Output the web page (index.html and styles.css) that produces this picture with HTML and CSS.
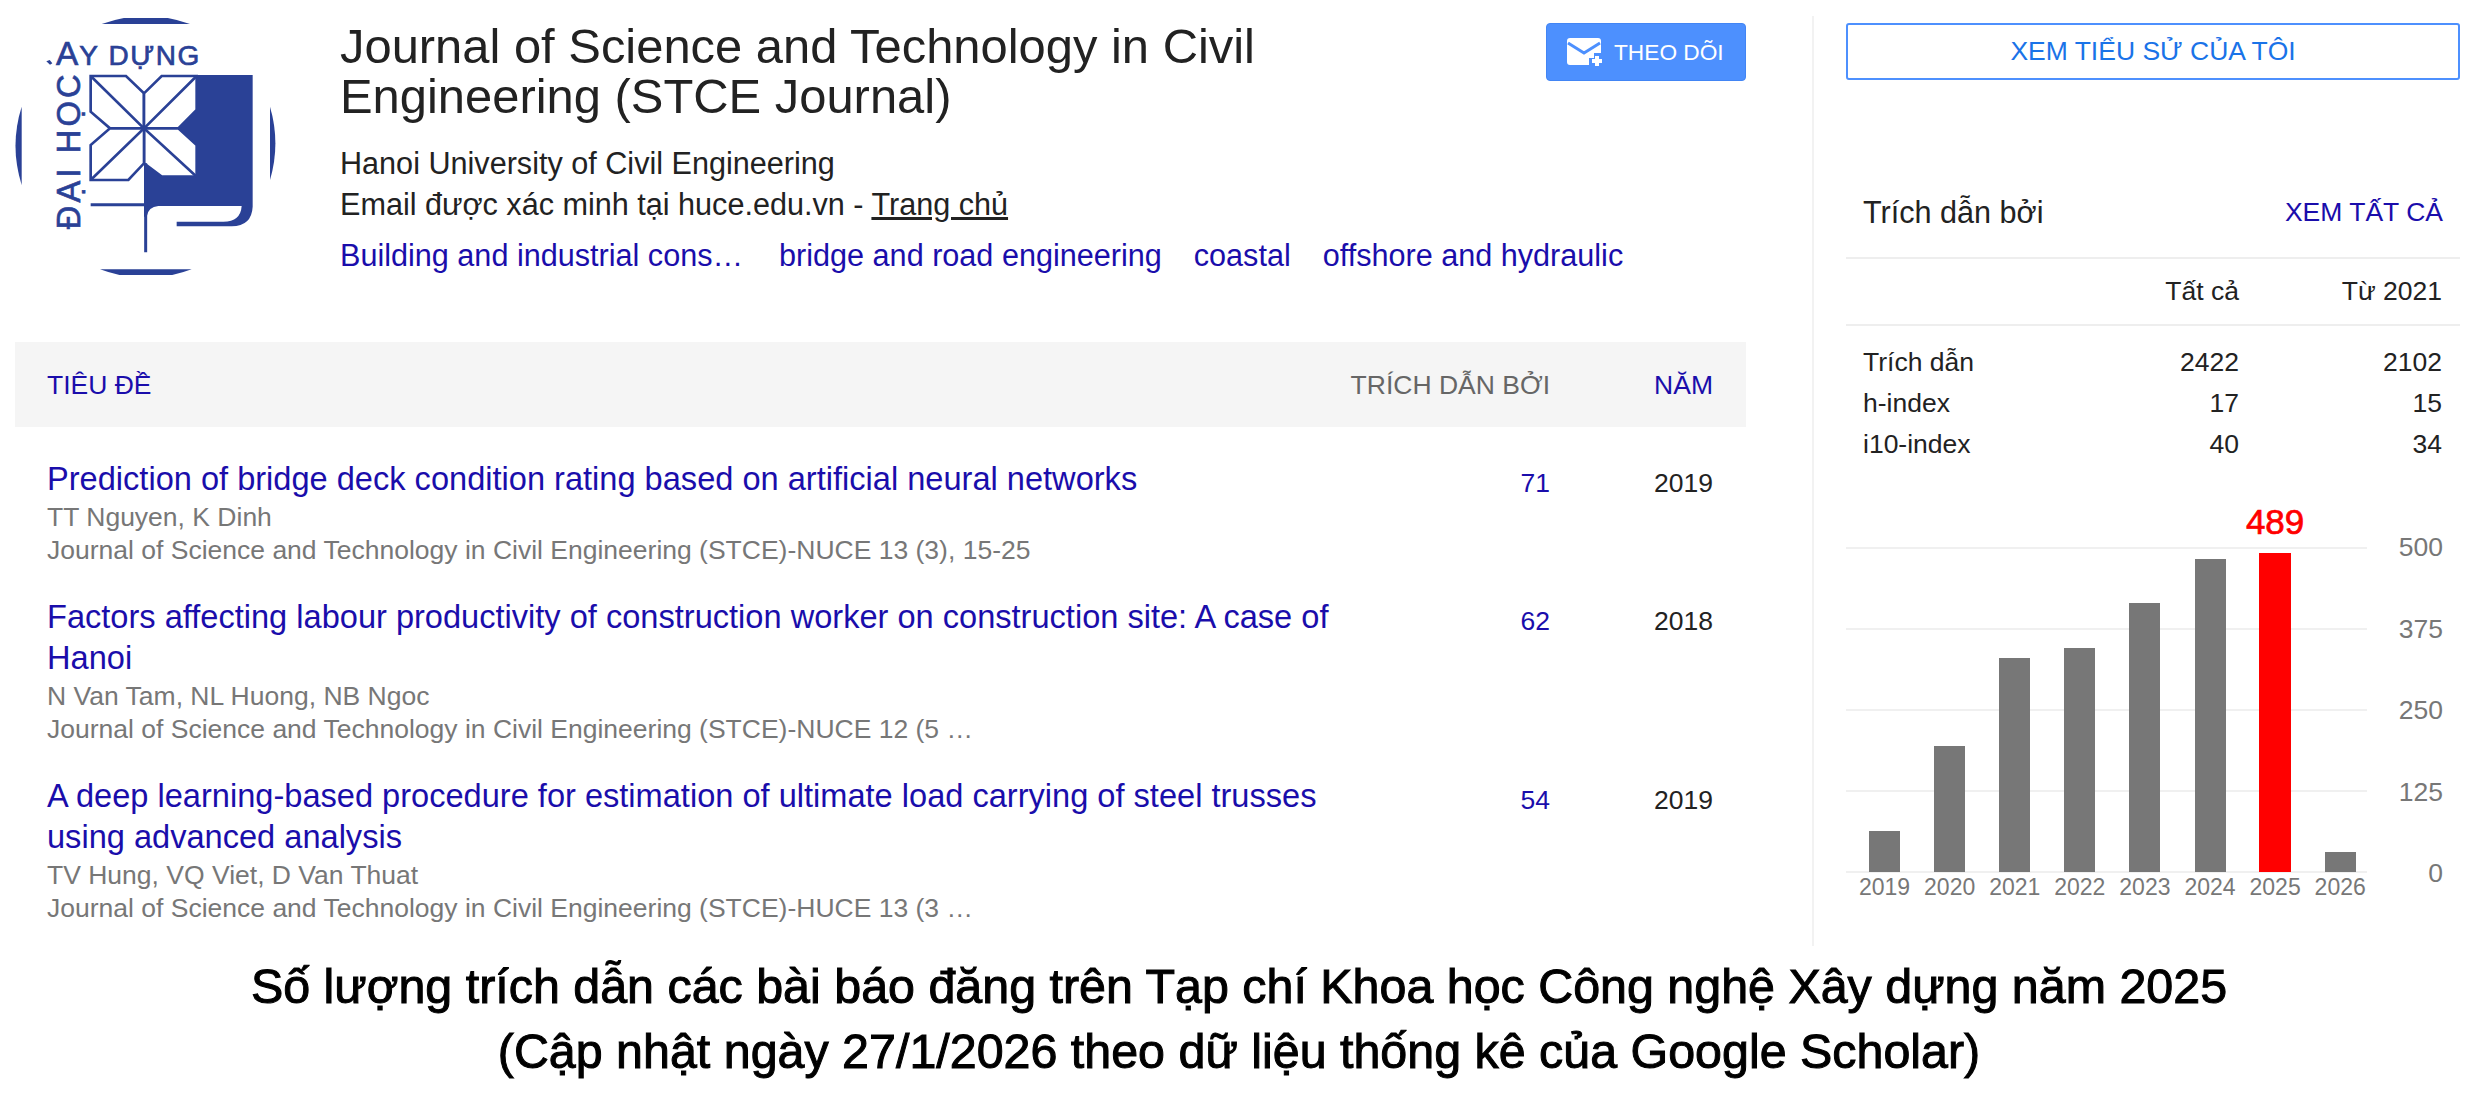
FILE: index.html
```html
<!DOCTYPE html>
<html lang="vi">
<head>
<meta charset="utf-8">
<title>Google Scholar</title>
<link rel="stylesheet" href="styles.css">
</head>
<body>
<main class="page">
  <section class="left">
    <header class="profile">
      <svg class="logo" viewBox="45 54 783 771" aria-label="Logo">
        <path class="logo-fill" d="M305 72A390 390 0 0 1 570 72Z"/>
        <path class="logo-fill" d="M300 808H575A390 390 0 0 1 300 808Z"/>
        <path class="logo-fill" d="M65 320V555A390 390 0 0 1 65 320Z"/>
        <path class="logo-fill" d="M810 320V540A390 390 0 0 0 810 320Z"/>
        <path class="logo-fill" d="M590 225H758V620Q755 678 695 679H530V665H670Q722 665 725 618H475Q445 620 440 650H432V490L432 385Z"/>
        <g class="petals">
          <path d="M272 228H378L432 280V385H330L272 335Z"/>
          <path d="M432 280L485 228H590V330L535 385H432Z"/>
          <path d="M432 385H535L590 435V530H485L432 490Z"/>
          <path d="M432 385H330L272 435V540H385L432 490Z"/>
          <path d="M272 228L432 385L590 228M272 540L432 385L590 530"/>
        </g>
        <path class="logo-line" d="M272 614H437M437 490V757"/>
        <path class="logo-fill" d="M139 184L149 180L157 190L150 194Z"/>
        <text class="logo-text logo-a" x="168" y="195">A</text>
        <text class="logo-text" x="238" y="195" textLength="360">Y DỰNG</text>
        <text class="logo-text logo-side" transform="translate(240 688) rotate(-90)" textLength="465">ĐẠI HỌC</text>
      </svg>
      <div class="info">
        <div class="info-top">
          <h1 class="name">Journal of Science and Technology in Civil Engineering (STCE Journal)</h1>
          <button class="follow">
            <svg class="follow-icon" viewBox="0 0 38 30"><path d="M3 1H31Q34 1 34 4V16H27V21H22V28H3Q0 28 0 25V4Q0 1 3 1Z"/><path class="env" d="M1 6L17 16L33 6"/><path class="plus" d="M30 19V29M25 24H35"/></svg>
            THEO DÕI
          </button>
        </div>
        <p class="line first">Hanoi University of Civil Engineering</p>
        <p class="line">Email được xác minh tại huce.edu.vn - <a class="home">Trang chủ</a></p>
        <p class="tags"><a class="tag-cut">Building and industrial cons…</a><a>bridge and road engineering</a><a>coastal</a><a>offshore and hydraulic</a></p>
      </div>
    </header>
    <div class="thead">
      <span class="th-title">TIÊU ĐỀ</span>
      <span class="th-cited">TRÍCH DẪN BỞI</span>
      <span class="th-year">NĂM</span>
    </div>
    <article class="row">
      <div class="cell-main">
        <a class="art-title">Prediction of bridge deck condition rating based on artificial neural networks</a>
        <div class="meta">TT Nguyen, K Dinh</div>
        <div class="meta">Journal of Science and Technology in Civil Engineering (STCE)-NUCE 13 (3), 15-25</div>
      </div>
      <a class="cited">71</a><span class="year">2019</span>
    </article>
    <article class="row">
      <div class="cell-main">
        <a class="art-title">Factors affecting labour productivity of construction worker on construction site: A case of Hanoi</a>
        <div class="meta">N Van Tam, NL Huong, NB Ngoc</div>
        <div class="meta">Journal of Science and Technology in Civil Engineering (STCE)-NUCE 12 (5 …</div>
      </div>
      <a class="cited">62</a><span class="year">2018</span>
    </article>
    <article class="row">
      <div class="cell-main">
        <a class="art-title">A deep learning-based procedure for estimation of ultimate load carrying of steel trusses using advanced analysis</a>
        <div class="meta">TV Hung, VQ Viet, D Van Thuat</div>
        <div class="meta">Journal of Science and Technology in Civil Engineering (STCE)-HUCE 13 (3 …</div>
      </div>
      <a class="cited">54</a><span class="year">2019</span>
    </article>
  </section>

  <aside class="right">
    <button class="profile-btn">XEM TIỂU SỬ CỦA TÔI</button>
    <div class="cite-head"><span class="cite-title">Trích dẫn bởi</span><a class="see-all">XEM TẤT CẢ</a></div>
    <div class="stat-head"><span></span><span>Tất cả</span><span>Từ 2021</span></div>
    <div class="stats">
      <span>Trích dẫn</span><span>2422</span><span>2102</span>
      <span>h-index</span><span>17</span><span>15</span>
      <span>i10-index</span><span>40</span><span>34</span>
    </div>
    <div class="chart">
      <div class="plot">
        <div class="grid"><i></i><i></i><i></i><i></i><i></i></div>
        <div class="bars">
          <div class="col"><div class="bar" style="height:41px"></div><span class="yr">2019</span></div>
          <div class="col"><div class="bar" style="height:126px"></div><span class="yr">2020</span></div>
          <div class="col"><div class="bar" style="height:214px"></div><span class="yr">2021</span></div>
          <div class="col"><div class="bar" style="height:224px"></div><span class="yr">2022</span></div>
          <div class="col"><div class="bar" style="height:269px"></div><span class="yr">2023</span></div>
          <div class="col"><div class="bar" style="height:313px"></div><span class="yr">2024</span></div>
          <div class="col"><b class="bar-value">489</b><div class="bar hot" style="height:319px"></div><span class="yr">2025</span></div>
          <div class="col"><div class="bar" style="height:20px"></div><span class="yr">2026</span></div>
        </div>
      </div>
      <div class="axis"><span>500</span><span>375</span><span>250</span><span>125</span><span>0</span></div>
    </div>
  </aside>
</main>
<footer class="caption">
  <p>Số lượng trích dẫn các bài báo đăng trên Tạp chí Khoa học Công nghệ Xây dựng năm 2025</p>
  <p>(Cập nhật ngày 27/1/2026 theo dữ liệu thống kê của Google Scholar)</p>
</footer>
</body>
</html>
```
FILE: styles.css
```css
* { box-sizing: border-box; }
html, body { margin: 0; padding: 0; }
body { width: 2481px; height: 1093px; background: #fff; font-family: "Liberation Sans", Arial, sans-serif; color: #222; overflow: hidden; }
a { color: #1a0dab; }
p { margin: 0; }
button { font-family: inherit; cursor: pointer; }

.page { display: flex; height: 946px; padding: 0 21px 0 15px; }
.left { width: 1731px; flex: none; }
.profile { display: flex; height: 342px; padding-top: 18px; }
.logo { width: 261px; height: 257px; flex: none; margin-right: 64px; }
.logo-fill { fill: #2a4196; }
.petals path { fill: #fff; stroke: #2a4196; stroke-width: 8; stroke-linejoin: miter; }
.petals path:last-child { fill: none; }
.logo-line { fill: none; stroke: #2a4196; stroke-width: 9; }
.logo-text { font-size: 84px; fill: #2a4196; stroke: #2a4196; stroke-width: 2; font-family: "Liberation Sans", Arial, sans-serif; }
.logo-a { font-size: 100px; }
.logo-side { font-size: 98px; }

.info { flex: 1; margin-top: -14px; }
.info-top { display: flex; justify-content: space-between; align-items: flex-start; }
.name { margin: 17px 0 0; width: 980px; font-weight: 400; font-size: 48.9px; line-height: 50px; color: #222; }
.follow { display: flex; align-items: center; gap: 9px; margin-top: 19px; width: 200px; height: 58px; padding: 0 0 0 20px; border: 1px solid #4285f4; border-radius: 4px; background: #4d90fe; color: #fff; font-size: 22.7px; }
.follow-icon { width: 38px; height: 30px; flex: none; }
.follow-icon path { fill: #fff; }
.follow-icon .env { fill: none; stroke: #4d90fe; stroke-width: 3; }
.follow-icon .plus { fill: none; stroke: #fff; stroke-width: 4; }
.line { font-size: 30.6px; line-height: 41px; color: #222; }
.line.first { margin-top: 22px; }
.home { color: #222; text-decoration: underline; }
.tags { display: flex; gap: 32px; margin-top: 10px; font-size: 30.6px; line-height: 41px; }
.tag-cut { margin-right: 4px; }

.thead { display: flex; align-items: center; height: 85px; padding: 2px 33px 0 32px; background: #f5f5f5; font-size: 26.5px; }
.th-title { flex: 1; color: #1a0dab; }
.th-cited { color: #666; }
.th-year { width: 163px; text-align: right; color: #1a0dab; }

.row { display: flex; align-items: flex-start; padding: 0 33px 0 32px; }
.row:first-of-type { margin-top: 31px; }
.cell-main { width: 1320px; margin-bottom: 30px; }
.art-title { display: block; margin-bottom: 2px; font-size: 32.6px; line-height: 41px; }
.meta { font-size: 26.5px; line-height: 32.5px; color: #777; }
.cited { width: 183px; text-align: right; font-size: 26.5px; line-height: 50px; }
.year { width: 163px; text-align: right; font-size: 26.5px; line-height: 50px; color: #222; }

.right { flex: 1; margin-left: 66px; padding-left: 32px; border-left: 2px solid #f2f2f2; margin-top: 16px; }
.profile-btn { display: block; width: 100%; height: 57px; margin-top: 7px; background: #fff; border: 2px solid #4d90fe; border-radius: 3px; color: #1a73e8; font-size: 26.5px; }
.cite-head { display: flex; justify-content: space-between; align-items: center; height: 78px; margin-top: 101px; padding: 0 17px 13px; border-bottom: 2px solid #eee; }
.cite-title { font-size: 30.6px; color: #222; }
.see-all { font-size: 26.5px; }
.stat-head { display: grid; grid-template-columns: 1fr 120px 203px; height: 67px; align-items: center; padding-right: 18px; border-bottom: 2px solid #eee; font-size: 26.5px; text-align: right; }
.stats { display: grid; grid-template-columns: 1fr 120px 203px; padding: 16px 18px 0 17px; font-size: 26.5px; line-height: 41px; text-align: right; }
.stats span:nth-child(3n+1) { text-align: left; }

.chart { display: flex; margin-top: 82px; }
.plot { position: relative; width: 521px; height: 326px; }
.grid { position: absolute; inset: 0; display: flex; flex-direction: column; justify-content: space-between; }
.grid i { display: block; height: 2px; background: #f0f0f0; }
.bars { position: absolute; inset: 0 0 1px 6px; display: flex; align-items: flex-end; }
.col { position: relative; flex: none; width: 65.1px; display: flex; flex-direction: column; align-items: center; }
.bar { width: 31px; background: #777; }
.bar.hot { width: 32px; background: #f00; }
.bar-value { position: absolute; left: 0; right: 0; top: -48px; text-align: center; font-size: 35px; font-weight: 400; line-height: 34px; color: #f00; -webkit-text-stroke: .7px #f00; white-space: nowrap; }
.yr { position: absolute; top: 100%; left: -5px; right: -5px; margin-top: 1px; text-align: center; font-size: 23px; line-height: 28px; color: #777; }
.axis { flex: 1; display: flex; flex-direction: column; justify-content: space-between; align-items: flex-end; height: 326px; padding-right: 17px; font-size: 26.5px; line-height: 0; color: #777; }

.caption { text-align: center; font-size: 48.4px; line-height: 65px; color: #000; padding: 8px 3px 0 0; -webkit-text-stroke: 1px #000; }
```
